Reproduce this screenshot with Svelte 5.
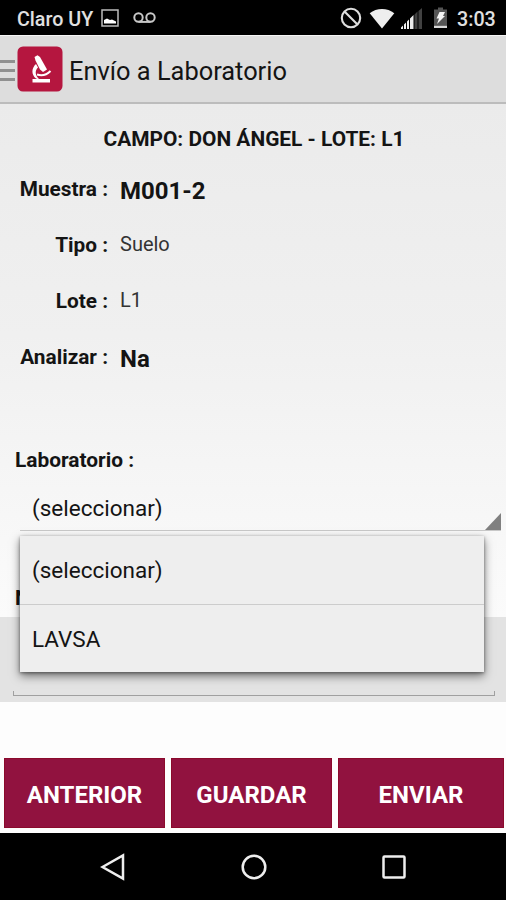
<script>
let details = [
  { label: 'Muestra :', value: 'M001-2', strong: true },
  { label: 'Tipo :', value: 'Suelo', strong: false },
  { label: 'Lote :', value: 'L1', strong: false },
  { label: 'Analizar :', value: 'Na', strong: true },
]
let options = ['(seleccionar)', 'LAVSA']
let selected = options[0]
let open = true

function choose(option) {
  selected = option
  open = false
}
</script>

<div class="screen">
  <div class="status-bar">
    <span class="carrier">Claro UY</span>
    <svg class="picture-icon" width="18" height="18" viewBox="0 0 18 18">
      <rect x="1" y="1" width="16" height="16" fill="none" stroke="#bcbcbc" stroke-width="1.5" />
      <path d="M3 14.500V11l3-1.500 3 1.500 2-.5 4 2v2z" fill="#fff" />
    </svg>
    <svg class="voicemail-icon" width="23" height="12" viewBox="0 0 23 12" fill="none" stroke="#c8c8c8" stroke-width="2">
      <circle cx="5.5" cy="5.5" r="4.2" />
      <circle cx="17.5" cy="5.5" r="4.2" />
      <path d="M5.5 9.9h12" />
    </svg>
    <span class="spacer"></span>
    <svg class="blocked-icon" width="22" height="22" viewBox="0 0 22 22" fill="none" stroke="#dedede" stroke-width="2.1">
      <circle cx="11" cy="11" r="9.2" />
      <path d="M4.5 4.5l13 13" />
    </svg>
    <svg class="wifi-icon" width="26" height="21" viewBox="0 0 26 21">
      <path d="M.7 5.3C7.500-.6 18.500-.6 25.300 5.300L13 20.500z" fill="#eee" />
    </svg>
    <svg class="signal-icon" width="22" height="21" viewBox="0 0 22 21">
      <path d="M0 21v-1.500l2-2V21zM3 21v-4.500l2-2V21zM6 21v-7.500l2-2V21zM9 21V10.500L12.500 7v14z" fill="#eee" />
      <path d="M13.500 21V6.500L16.500 3.500V21zM17.500 21V3L21 0v21z" fill="#414141" />
    </svg>
    <svg class="battery-icon" width="15" height="22" viewBox="0 0 15 22">
      <path d="M1 2.500h4V.5h5v2h4V18H1z" fill="#555" />
      <path d="M1 18.500h13V21H1z" fill="#d8d8d8" />
      <path d="M6.500 5h5.500L10 9h2l-8 8 2-5.500H3.500z" fill="#f4f4f4" />
    </svg>
    <span class="clock">3:03</span>
  </div>

  <div class="action-bar">
    <div class="drawer-icon">
      <span></span>
      <span></span>
      <span></span>
    </div>
    <svg class="app-icon" width="46" height="46" viewBox="0 0 46 46">
      <rect x=".5" y=".5" width="45" height="45" rx="5.500" fill="#b5163f" />
      <path d="M17.500 11l3-1.800 2.500 1.800 7 12.500-4 2.500-3-2.500-4.500-9z" fill="#fff" />
      <path d="M19 18c-4.500 4-5 10.500 0 14.500l3.500 1c-4.500-3.500-5-9-1.500-12z" fill="#fff" />
      <path d="M20 28.500c4.500 1.500 9.500.5 13.500-3.500" fill="none" stroke="#fff" stroke-width="2" />
      <path d="M15.500 33h17.500v3.500H15.500z" fill="#fff" />
    </svg>
    <h1>Envío a Laboratorio</h1>
  </div>

  <div class="content">
    <h2>CAMPO: DON ÁNGEL - LOTE: L1</h2>
    {#each details as row}
      <div class="detail">
        <span class="detail-label">{row.label}</span>
        <span class="detail-value" class:strong={row.strong}>{row.value}</span>
      </div>
    {/each}

    <div class="field-label">Laboratorio :</div>
    <div class="spinner-area">
      <button class="spinner" on:click={() => (open = !open)}>
        {selected}
        <svg class="corner" width="16" height="17" viewBox="0 0 16 17">
          <path d="M0 17L16 0v17z" fill="#808080" />
        </svg>
      </button>
      {#if open}
        <div class="dropdown">
          {#each options as option}
            <button class="option" on:click={() => choose(option)}>{option}</button>
          {/each}
        </div>
      {/if}
    </div>
    <div class="notes-label">N</div>
  </div>

  <div class="notes">
    <div class="notes-line"></div>
  </div>

  <div class="actions">
    <button>ANTERIOR</button>
    <button>GUARDAR</button>
    <button>ENVIAR</button>
  </div>

  <div class="nav-bar">
    <svg width="26" height="28" viewBox="0 0 26 28">
      <path d="M2.500 14L23 2.500v23z" />
    </svg>
    <svg width="28" height="28" viewBox="0 0 28 28">
      <circle cx="14" cy="14" r="11.300" />
    </svg>
    <svg width="26" height="26" viewBox="0 0 26 26">
      <rect x="2.500" y="2.500" width="21" height="21" rx="1" />
    </svg>
  </div>
</div>

<style>
:global(body) {
  margin: 0;
}

.screen {
  display: flex;
  flex-direction: column;
  width: 506px;
  height: 900px;
  overflow: hidden;
  background: #fdfdfd;
  color: #141414;
  font-family: Roboto, sans-serif;
}

button {
  margin: 0;
  padding: 0;
  border: 0;
  border-radius: 0;
  font-family: inherit;
  color: inherit;
}

svg {
  display: block;
  flex: none;
}

.status-bar {
  display: flex;
  align-items: center;
  box-sizing: border-box;
  height: 35px;
  padding: 1px 11px 0 17px;
  background: #000;
  color: #e0e0e0;
  font-size: 19.7px;
  font-weight: 500;
  white-space: nowrap;
}

.carrier {
  width: 76px;
  margin-top: 2px;
}

.picture-icon {
  margin-left: 8px;
}

.voicemail-icon {
  margin-left: 14px;
}

.spacer {
  flex: 1;
}

.wifi-icon {
  margin-left: 7px;
}

.signal-icon {
  margin: 0 0 0 6px;
}

.battery-icon {
  margin-left: 10px;
}

.clock {
  width: 38px;
  margin: 2px 0 0 9px;
}

.action-bar {
  display: flex;
  align-items: center;
  box-sizing: border-box;
  height: 69px;
  border-top: 1px solid #f5f5f5;
  border-bottom: 2px solid #bcbcbc;
  background: #ddd;
}

.drawer-icon {
  display: flex;
  flex-direction: column;
  gap: 6px;
  width: 15px;
  margin: 2px 2px 0 0;
}

.drawer-icon span {
  height: 3px;
  background: #909090;
}

h1 {
  margin: 3px 0 0 6px;
  font-size: 25.4px;
  font-weight: 400;
  white-space: nowrap;
}

.content {
  display: flex;
  flex-direction: column;
  height: 513px;
  background: linear-gradient(#ebebeb, #f0f0f0 45%, #fbfbfb);
}

h2 {
  margin: 0;
  padding: 13px 0 0 2px;
  font-size: 20.9px;
  font-weight: 700;
  line-height: 44px;
  text-align: center;
}

.detail {
  display: flex;
  align-items: center;
  height: 56px;
}

.detail-label {
  width: 108px;
  font-size: 20.8px;
  font-weight: 700;
  text-align: right;
}

.detail-value {
  margin: -2px 0 0 12px;
  font-size: 20px;
  color: #333;
}

.detail-value.strong {
  margin-top: 4px;
  font-size: 24px;
  font-weight: 700;
  color: #141414;
}

.field-label {
  margin: 60px 0 0 15px;
  font-size: 20.9px;
  font-weight: 700;
  line-height: 30px;
}

.spinner-area {
  position: relative;
  margin: 10px 5px 0 20px;
}

.spinner {
  display: flex;
  align-items: center;
  justify-content: space-between;
  box-sizing: border-box;
  width: 100%;
  height: 46px;
  padding: 0 0 0 12px;
  border-bottom: 1px solid #c8c8c8;
  background: transparent;
  font-size: 22.5px;
}

.corner {
  align-self: flex-end;
}

.dropdown {
  position: absolute;
  top: 51px;
  left: 0;
  z-index: 1;
  width: 464px;
  background: #eee;
  box-shadow: 0 4px 9px rgba(0, 0, 0, 0.5), 0 1px 3px rgba(0, 0, 0, 0.4);
}

.option {
  display: block;
  box-sizing: border-box;
  width: 100%;
  height: 68px;
  padding: 0 0 0 12px;
  background: transparent;
  font-size: 22.5px;
  text-align: left;
}

.option + .option {
  border-top: 1px solid #ccc;
}

.notes-label {
  margin: 52px 0 0 15px;
  font-size: 20.8px;
  font-weight: 700;
  line-height: 30px;
}

.notes {
  display: flex;
  align-items: flex-end;
  box-sizing: border-box;
  height: 85px;
  padding: 0 11px 6px 13px;
  background: #e3e3e3;
}

.notes-line {
  flex: 1;
  height: 4px;
  border: solid #a0a0a0;
  border-width: 0 1px 1px;
}

.actions {
  display: grid;
  grid-template-columns: 161px 161px 166px;
  gap: 6px;
  margin: 56px 0 0 4px;
}

.actions button {
  height: 70px;
  padding-top: 4px;
  border: 1px solid #8b0a2c;
  background: #91123f;
  color: #fff;
  font-size: 24px;
  font-weight: 700;
}

.nav-bar {
  display: flex;
  align-items: center;
  justify-content: space-between;
  box-sizing: border-box;
  height: 67px;
  margin-top: auto;
  padding: 0 99px 0 100px;
  background: #000;
}

.nav-bar svg {
  fill: none;
  stroke: #eee;
  stroke-width: 2.5;
}
</style>
